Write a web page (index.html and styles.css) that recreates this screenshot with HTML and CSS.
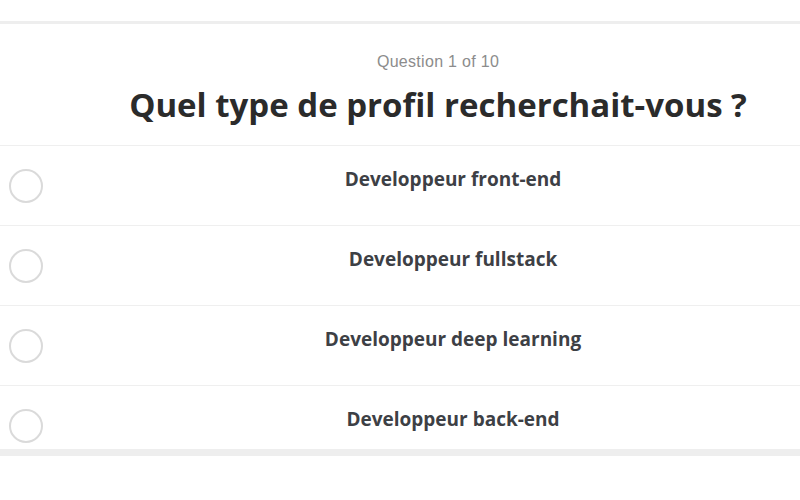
FILE: index.html
```html
<!DOCTYPE html>
<html lang="fr">
<head>
<meta charset="utf-8">
<title>Quiz</title>
<link rel="stylesheet" href="styles.css">
</head>
<body>
<div class="page">
  <div class="card">
    <div class="header">
      <p class="counter">Question 1 of 10</p>
      <h1 class="title">Quel type de profil recherchait-vous ?</h1>
    </div>
    <ul class="options">
      <li class="option"><span class="radio"></span><span class="label">Developpeur front-end</span></li>
      <li class="option"><span class="radio"></span><span class="label">Developpeur fullstack</span></li>
      <li class="option"><span class="radio"></span><span class="label">Developpeur deep learning</span></li>
      <li class="option"><span class="radio"></span><span class="label">Developpeur back-end</span></li>
    </ul>
  </div>
</div>
</body>
</html>
```
FILE: styles.css
```css
html, body {
  margin: 0;
  padding: 0;
  background: #ffffff;
  overflow: hidden;
}
.page {
  padding-top: 21px;
  width: 876px;
}
.card {
  border-top: 3px solid #eeeeee;
}
.header {
  box-sizing: border-box;
  height: 122px;
  padding-top: 29px;
  text-align: center;
  border-bottom: 1px solid #efefef;
}
.counter {
  margin: 0;
  font-family: "Liberation Sans", Arial, sans-serif;
  font-size: 16px;
  line-height: 18px;
  color: #8c8c8c;
  letter-spacing: 0.3px;
}
.title {
  margin: 11px 0 0;
  font-family: "Open Sans", sans-serif;
  font-weight: 700;
  font-size: 33px;
  line-height: 45px;
  color: #2b2b2b;
}
.options {
  list-style: none;
  margin: 0;
  padding: 0;
  height: 303px;
  overflow: hidden;
  border-bottom: 7px solid #eeeeee;
}
.option {
  display: flex;
  align-items: flex-start;
  height: 79px;
  border-bottom: 1px solid #efefef;
}
.radio {
  box-sizing: border-box;
  width: 34px;
  height: 34px;
  margin: 23px 0 0 9px;
  border: 2px solid #dadada;
  border-radius: 50%;
  flex: none;
}
.label {
  flex: 1;
  padding: 20px 13px 0 0;
  text-align: center;
  font-family: "Open Sans", sans-serif;
  font-weight: 700;
  font-size: 19px;
  line-height: 26px;
  color: #3d4045;
}
```
